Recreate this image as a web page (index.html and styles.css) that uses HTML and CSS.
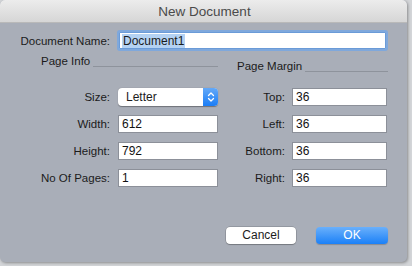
FILE: index.html
```html
<!DOCTYPE html>
<html>
<head>
<meta charset="utf-8">
<link rel="stylesheet" href="styles.css">
</head>
<body>
<div class="window">
  <div class="titlebar">New Document</div>
  <div class="content">
    <div class="name-row">
      <label class="name-label">Document Name:</label>
      <div class="name-field"><span class="sel">Document1</span></div>
    </div>
    <div class="sections">
      <div class="section left">
        <div class="sec-head"><span class="sec-title">Page Info</span><span class="sec-line"></span></div>
        <div class="grid">
          <span class="lbl">Size:</span>
          <div class="select"><span class="sel-text">Letter</span><span class="sel-arrow"><svg width="8" height="12" viewBox="0 0 8 12"><path d="M1.5 4.5 L4 2 L6.5 4.5 M1.5 7.5 L4 10 L6.5 7.5" fill="none" stroke="#fff" stroke-width="1.3" stroke-linecap="round" stroke-linejoin="round"/></svg></span></div>
          <span class="lbl">Width:</span>
          <div class="field">612</div>
          <span class="lbl">Height:</span>
          <div class="field">792</div>
          <span class="lbl">No Of Pages:</span>
          <div class="field">1</div>
        </div>
      </div>
      <div class="section right">
        <div class="sec-head"><span class="sec-title">Page Margin</span><span class="sec-line"></span></div>
        <div class="grid">
          <span class="lbl">Top:</span>
          <div class="field">36</div>
          <span class="lbl">Left:</span>
          <div class="field">36</div>
          <span class="lbl">Bottom:</span>
          <div class="field">36</div>
          <span class="lbl">Right:</span>
          <div class="field">36</div>
        </div>
      </div>
    </div>
    <div class="buttons">
      <div class="btn cancel">Cancel</div>
      <div class="btn ok">OK</div>
    </div>
  </div>
</div>
</body>
</html>
```
FILE: styles.css
```css
html, body {
  margin: 0;
  padding: 0;
}
body {
  width: 412px;
  height: 266px;
  background: #d3d5d8;
  font-family: "Liberation Sans", Arial, sans-serif;
  font-size: 11.5px;
  color: #1b1b1b;
  overflow: hidden;
}
.window {
  width: 407px;
  height: 262px;
  background: #a9aeb8;
  border-radius: 5px;
  box-shadow: 1px 1px 3px rgba(0,0,0,0.35);
  overflow: hidden;
  display: flex;
  flex-direction: column;
}
.titlebar {
  height: 23px;
  flex: none;
  background: linear-gradient(#ececec, #d6d6d6);
  border-bottom: 1px solid #b9b9b9;
  box-sizing: border-box;
  text-align: center;
  line-height: 23px;
  font-size: 13.5px;
  color: #4a4a4a;
  padding-left: 2px;
}
.content {
  flex: 1;
  display: flex;
  flex-direction: column;
}
.name-row {
  display: flex;
  align-items: center;
  margin-top: 9px;
  height: 17px;
}
.name-label {
  width: 110px;
  text-align: right;
  flex: none;
}
.name-field {
  margin-left: 9px;
  width: 267px;
  height: 17px;
  box-sizing: border-box;
  background: #fff;
  border: 1px solid #6a9bd8;
  box-shadow: 0 0 0 2px #7fa8dc;
  border-radius: 1px;
  padding-left: 2px;
  display: flex;
  align-items: center;
  font-size: 12px;
}
.sel {
  background: #b4d2f3;
  line-height: 14px;
  padding: 0 1px;
}
.sections {
  display: flex;
  margin-top: 5px;
}
.section.left {
  margin-left: 20px;
  width: 198px;
}
.section.right {
  margin-left: 12px;
  width: 158px;
  padding-top: 5px;
}
.sec-head {
  display: flex;
  align-items: center;
  height: 14px;
}
.section.left .sec-head { padding-left: 21px; }
.section.right .sec-head { padding-left: 7px; }
.sec-title {
  flex: none;
  margin-top: 0;
}
.sec-line {
  flex: 1;
  height: 1px;
  background: #8e939c;
  margin-left: 3px;
  margin-top: 10px;
}
.grid {
  display: grid;
  row-gap: 9px;
  column-gap: 8px;
  margin-top: 20px;
  align-items: center;
}
.section.left .grid {
  grid-template-columns: 90px 100px;
}
.section.right .grid {
  grid-template-columns: 55px 95px;
  column-gap: 7px;
  margin-top: 15px;
}
.lbl {
  text-align: right;
}
.field {
  height: 18px;
  box-sizing: border-box;
  background: #fff;
  border: 1px solid #8c9099;
  padding-left: 3px;
  line-height: 17px;
  font-size: 12px;
  color: #111;
}
.select {
  height: 18px;
  box-sizing: border-box;
  background: #fff;
  border-radius: 4px;
  box-shadow: 0 0.5px 1px rgba(0,0,0,0.35);
  display: flex;
  align-items: stretch;
  overflow: hidden;
}
.sel-text {
  flex: 1;
  padding-left: 8px;
  line-height: 18px;
  font-size: 12px;
}
.sel-arrow {
  width: 15px;
  background: linear-gradient(#64a9f8, #1a7df6);
  display: flex;
  align-items: center;
  justify-content: center;
}
.buttons {
  display: flex;
  justify-content: flex-end;
  gap: 20px;
  margin-top: 40px;
  padding-right: 19px;
}
.btn {
  height: 17px;
  box-sizing: border-box;
  border-radius: 4px;
  text-align: center;
  line-height: 17px;
  font-size: 12px;
}
.cancel {
  width: 70px;
  background: #fff;
  box-shadow: 0 0 0 0.5px rgba(0,0,0,0.25), 0 1px 1px rgba(0,0,0,0.2);
  color: #1b1b1b;
}
.ok {
  width: 72px;
  background: linear-gradient(#6ab0fb, #1b80f7);
  color: #fff;
  box-shadow: 0 1px 1px rgba(0,0,0,0.2);
}
```
